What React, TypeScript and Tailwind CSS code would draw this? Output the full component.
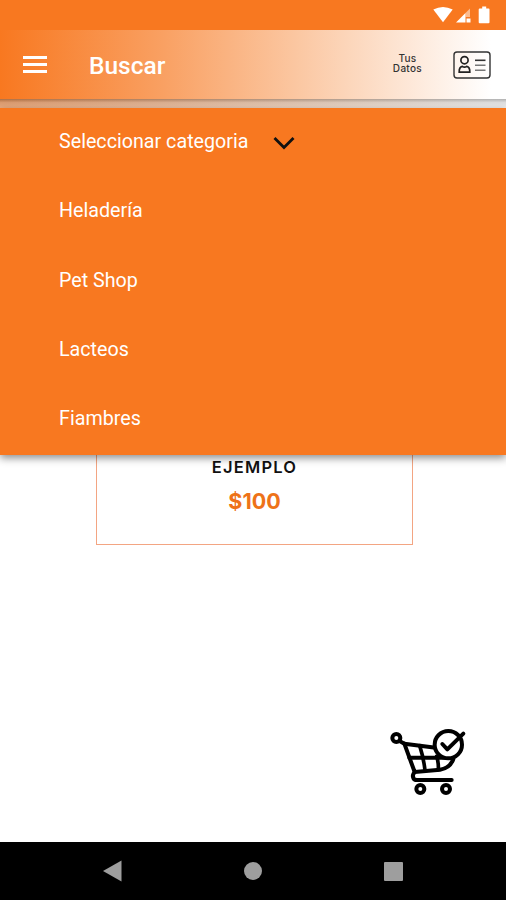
/**
 * Search screen: category menu open over the product list.
 */
import { useState } from "react";

const CATEGORIES = ["Heladería", "Pet Shop", "Lacteos", "Fiambres"];

function StatusBar() {
  return (
    <div className="flex h-[30px] shrink-0 items-start justify-end bg-[#f87820]">
      <svg className="h-[30px] w-[86px]" viewBox="0 0 86 30" fill="#fff">
        <path d="M13.3 9.5Q23 4.5 32.7 9.5L23 22.3Z" />
        <path d="M36 22.5L45.5 13V22.5Z" />
        <path d="M45.5 13L50 8.5V17H45.5Z" opacity="0.5" />
        <path d="M46.5 18.5h4v4h-4z" />
        <path d="M59.7 8.5h2.5v-2h4v2h2.5q.8 0 .8 1v12.7q0 1-1 1h-8.8q-1 0-1-1v-12.7q0-1 1-1z" />
      </svg>
    </div>
  );
}

function IdCardIcon() {
  return (
    <svg className="h-[28px] w-[38px]" viewBox="0 0 38 28" fill="none" stroke="#333" strokeWidth="1.4">
      <rect x="1" y="1" width="36" height="26" rx="3" />
      <circle cx="11.5" cy="9.2" r="3.6" stroke="#222" strokeWidth="1.7" />
      <path d="M6.2 21.2Q6 16 9.3 15.4Q11.5 17 13.7 15.4Q17 16 16.8 21.2Z" stroke="#222" strokeWidth="1.7" />
      <path d="M22 9.3H32.5" strokeWidth="1.6" />
      <path d="M22 14.3H32.5M22 19.3H32.5" stroke="#777" strokeWidth="1.5" />
    </svg>
  );
}

function CartIcon() {
  return (
    <svg className="h-[90px] w-[110px]" viewBox="0 0 330 270" fill="none" stroke="#000" strokeWidth="12" strokeLinecap="round" strokeLinejoin="round">
      <circle cx="64" cy="69" r="12" />
      <path d="M75 79L88 86L182 98" />
      <path d="M88 86L119 171L195 164Q226 159 235 132" />
      <path d="M103 128H230" />
      <path d="M134 92Q146 130 150 166" strokeWidth="11" />
      <path d="M185 124Q191 142 190 164" strokeWidth="11" />
      <path d="M119 171Q111 180 115 189Q117 195 126 195H230" />
      <circle cx="136" cy="222" r="12" />
      <circle cx="213" cy="222" r="12" />
      <circle cx="220" cy="89" r="41" fill="#fff" />
      <path d="M202 87L217 103L265 56" />
    </svg>
  );
}

function TopBar() {
  return (
    <header className="flex h-[78px] shrink-0 flex-col bg-[linear-gradient(90deg,#f87820_0%,#f9a062_32%,#fbc6a0_58%,#fff_97%)]">
      <div className="flex h-[69px] items-center pr-[15px] pl-[23px] text-white">
        <button aria-label="Menu" className="flex w-6 flex-col gap-1 pb-px">
          <span className="h-[3px] bg-white" />
          <span className="h-[3px] bg-white" />
          <span className="h-[3px] bg-white" />
        </button>
        <h1 className="ml-[42px] pt-[3px] text-[24.5px] leading-7 font-medium">Buscar</h1>
        <div className="ml-auto flex items-center">
          <div className="mr-[31px] flex flex-col items-center pb-1 font-['Inter',sans-serif] text-[10px] leading-[10px] font-medium tracking-[0.3px] text-[#333]">
            <span>Tus</span>
            <span>Datos</span>
          </div>
          <IdCardIcon />
        </div>
      </div>
      <div className="h-[9px] bg-[linear-gradient(rgba(100,100,100,0.5),rgba(190,190,190,0.5)_40%,rgba(225,225,225,0.5))]" />
    </header>
  );
}

export default function App() {
  const [selected, setSelected] = useState("Seleccionar categoria");

  return (
    <div className="flex h-[900px] w-[506px] flex-col overflow-hidden bg-white font-['Roboto',sans-serif]">
      <StatusBar />
      <TopBar />

      <main className="relative flex flex-1 flex-col">
        {/* Product card, partly under the menu */}
        <div className="ml-[96px] flex h-[437px] w-[317px] flex-col items-center justify-end border border-[#f3a582] pb-[29px] font-['Inter',sans-serif]">
          <p className="text-[16.5px] leading-6 font-semibold tracking-[1.2px] text-[#111]">EJEMPLO</p>
          <p className="mt-[8px] text-[21.5px] leading-7 font-bold text-[#ee7218]">$100</p>
        </div>
        <button aria-label="Carrito" className="mt-auto mr-[21px] mb-[37px] self-end">
          <CartIcon />
        </button>

        {/* Category menu */}
        <ul className="absolute inset-x-0 top-0 h-[347px] bg-[#f87820] text-[19.7px] text-white shadow-[0_3px_8px_rgba(0,0,0,0.45)]">
          <li className="flex h-[69.4px] items-center pb-[2px] pl-[59px]">
            <span className="w-[189px] whitespace-nowrap">{selected}</span>
            <svg className="mt-[2px] ml-[25px] h-[14px] w-[22px]" viewBox="0 0 22 14" fill="none" stroke="#111" strokeWidth="2.8">
              <path d="M1.5 2L11 11.5L20.5 2" />
            </svg>
          </li>
          {CATEGORIES.map((name) => (
            <li key={name} onClick={() => setSelected(name)} className="flex h-[69.4px] cursor-pointer items-center pb-[2px] pl-[59px]">
              {name}
            </li>
          ))}
        </ul>
      </main>

      {/* Android navigation */}
      <nav className="flex h-[58px] shrink-0 items-center justify-between bg-black pr-[103px] pl-[103px]">
        <svg className="h-[22px] w-[19px]" viewBox="0 0 19 22" fill="#9e9e9e"><path d="M0 11L18.5 0.5V21.5Z" /></svg>
        <span className="size-[18px] rounded-full bg-[#9e9e9e]" />
        <span className="size-[19px] rounded-[1px] bg-[#9e9e9e]" />
      </nav>
    </div>
  );
}
